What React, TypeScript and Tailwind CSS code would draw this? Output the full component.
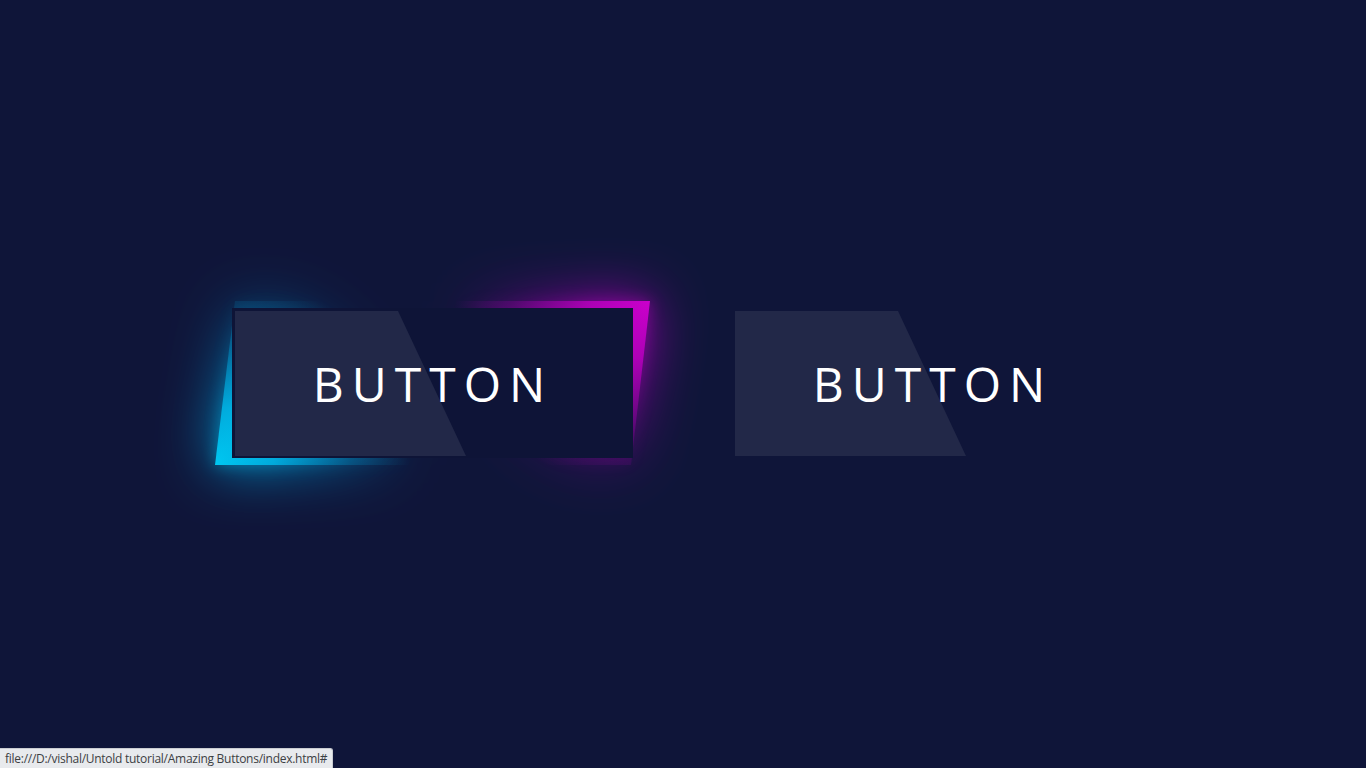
import React from 'react';

const font = { fontFamily: '"Open Sans", "Noto Sans", "Liberation Sans", sans-serif' };

export default function App() {
  return (
    <div
      className="relative flex h-screen w-full items-center justify-center gap-[100px] overflow-hidden bg-[#0f1539]"
      style={font}
    >
      <NeonButton active />
      <NeonButton />
      <StatusBubble text="file:///D:/vishal/Untold tutorial/Amazing Buttons/index.html#" />
    </div>
  );
}

function NeonButton({ active = false }: { active?: boolean }) {
  return (
    <a href="#" className="relative block h-[150px] w-[400px] shrink-0 cursor-pointer select-none">
      {active && <HoverFrame />}
      <span className="absolute left-[2px] top-[2px] h-[145px] w-[231px] bg-[#222848] [clip-path:polygon(0_0,163px_0,231px_100%,0_100%)]" />
      <span className="relative flex h-full w-full items-center justify-center text-[48px] font-normal leading-none tracking-[8px] text-white">
        BUTTON
      </span>
    </a>
  );
}

// neon frame drawn in page coordinates (button sits at 234,310)
function HoverFrame() {
  const frame = '236,302 651,302 632,466 216,466';
  return (
    <svg
      className="pointer-events-none absolute left-[-134px] top-[-150px] h-[450px] w-[700px]"
      viewBox="100 160 700 450"
    >
      <defs>
        <radialGradient id="cyanGrad" gradientUnits="userSpaceOnUse" cx="216" cy="466" r="195">
          <stop offset="0" stopColor="#00c8f2" stopOpacity="1" />
          <stop offset="0.3" stopColor="#00b6e8" stopOpacity="0.85" />
          <stop offset="0.7" stopColor="#0090c8" stopOpacity="0.3" />
          <stop offset="1" stopColor="#0090c8" stopOpacity="0" />
        </radialGradient>
        <radialGradient id="magentaGrad" gradientUnits="userSpaceOnUse" cx="651" cy="302" r="195">
          <stop offset="0" stopColor="#cc00cc" stopOpacity="1" />
          <stop offset="0.3" stopColor="#b800bf" stopOpacity="0.85" />
          <stop offset="0.7" stopColor="#9000a0" stopOpacity="0.3" />
          <stop offset="1" stopColor="#9000a0" stopOpacity="0" />
        </radialGradient>
        <radialGradient id="cyanGlow" gradientUnits="userSpaceOnUse" cx="216" cy="466" r="190">
          <stop offset="0" stopColor="#00a8e0" stopOpacity="1" />
          <stop offset="0.5" stopColor="#0088c0" stopOpacity="0.5" />
          <stop offset="1" stopColor="#0088c0" stopOpacity="0" />
        </radialGradient>
        <radialGradient id="magentaGlow" gradientUnits="userSpaceOnUse" cx="651" cy="302" r="190">
          <stop offset="0" stopColor="#b000c0" stopOpacity="1" />
          <stop offset="0.5" stopColor="#8a0aa0" stopOpacity="0.5" />
          <stop offset="1" stopColor="#8a0aa0" stopOpacity="0" />
        </radialGradient>
        <filter id="glowWide" x="-50%" y="-50%" width="200%" height="200%">
          <feGaussianBlur stdDeviation="28" />
        </filter>
        <filter id="glowNear" x="-50%" y="-50%" width="200%" height="200%">
          <feGaussianBlur stdDeviation="8" />
        </filter>
      </defs>

      <g filter="url(#glowWide)">
        <polygon points={frame} fill="url(#cyanGlow)" />
        <polygon points={frame} fill="url(#magentaGlow)" />
        <polygon points={frame} fill="url(#cyanGlow)" />
        <polygon points={frame} fill="url(#magentaGlow)" />
      </g>
      <g filter="url(#glowNear)" opacity="0.45">
        <polygon points={frame} fill="url(#cyanGrad)" />
        <polygon points={frame} fill="url(#magentaGrad)" />
      </g>

      <polygon points={frame} fill="url(#cyanGrad)" />
      <polygon points={frame} fill="url(#magentaGrad)" />

      <rect x="233" y="309" width="401" height="150" fill="#0e1437" />
    </svg>
  );
}

function StatusBubble({ text }: { text: string }) {
  return (
    <div className="absolute bottom-0 left-0 flex h-[20px] items-center rounded-tr-[3px] border-r border-t border-[#c9ccd1] bg-[#e8eaed] pl-[5px] pr-[5px] text-[12px] leading-none tracking-[-0.27px] text-[#3c4043]">
      {text}
    </div>
  );
}
